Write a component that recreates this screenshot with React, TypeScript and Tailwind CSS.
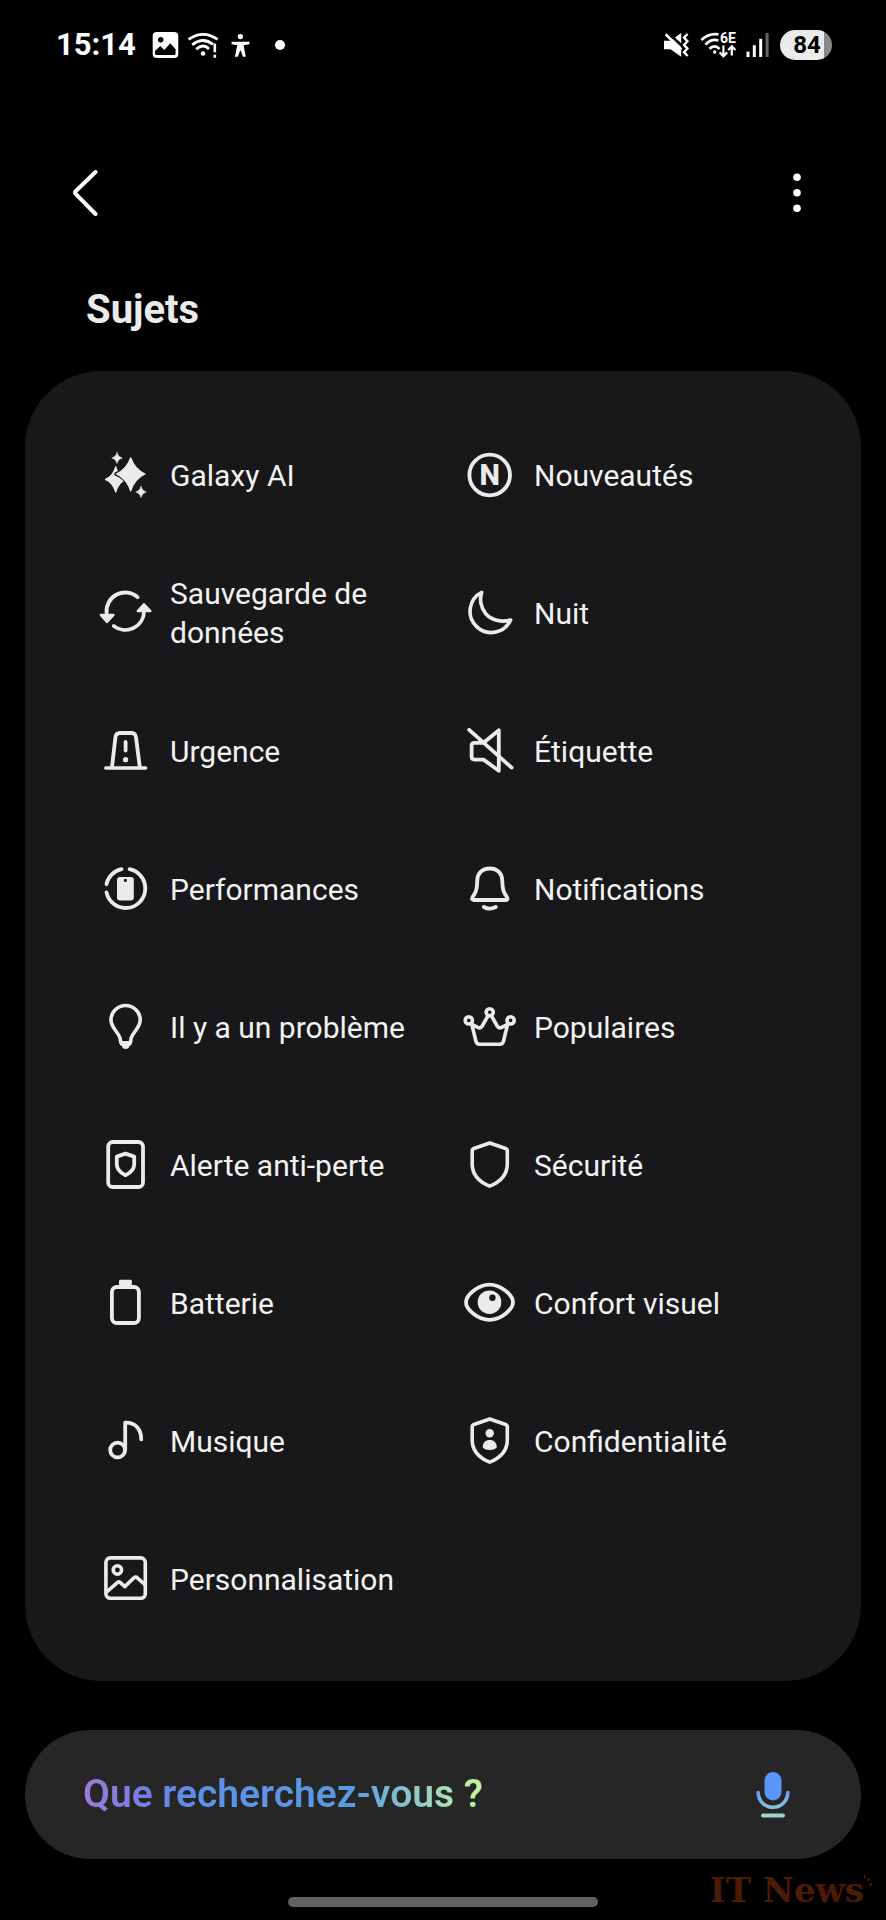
import React from "react";

type Topic = {
  label: string;
  icon: React.ReactNode;
};

const SHIELD =
  "M26.7 5 L43.3 10.8 Q44.3 11.2 44.3 12.3 V26 C44.3 36.5 37.5 43.8 26.7 48.2 C16 43.8 9.2 36.5 9.2 26 V12.3 Q9.2 11.2 10.2 10.8 Z";

const topics: Topic[] = [
  {
    label: "Galaxy AI",
    icon: (
      <g fill="currentColor" stroke="none">
        <path d="M16.7 18.7 Q19.7 28.3 27.3 31.4 Q19.7 34.5 16.7 44.3 Q13.7 34.5 6 31.4 Q13.7 28.3 16.7 18.7Z" stroke="currentColor" strokeWidth="1" />
        <path
          d="M31.7 9.8 Q34.7 22.3 46 26 Q34.7 29.7 31.7 43 Q28.7 29.7 17.4 26 Q28.7 22.3 31.7 9.8Z"
          stroke="#18181a"
          strokeWidth="4.4"
        />
        <path d="M31.7 9.8 Q35.7 21.3 46 26 Q35.7 30.7 31.7 43 Q27.7 30.7 17.4 26 Q27.7 21.3 31.7 9.8Z" stroke="currentColor" strokeWidth="1.2" />
        <path d="M18 4.8 Q19 9 23.2 10 Q19 11 18 15.4 Q17 11 12.8 10 Q17 9 18 4.8Z" stroke="currentColor" strokeWidth="0.6" />
        <path d="M42 38.6 Q43 43 47.2 44 Q43 45 42 49.4 Q41 45 36.8 44 Q41 43 42 38.6Z" stroke="currentColor" strokeWidth="0.6" />
      </g>
    ),
  },
  {
    label: "Nouveautés",
    icon: (
      <>
        <circle cx="26.7" cy="27" r="20.3" />
        <text
          x="26.7"
          y="37"
          fill="currentColor"
          stroke="none"
          textAnchor="middle"
          className="text-[29px] font-extrabold"
        >
          N
        </text>
      </>
    ),
  },
  {
    label: "Sauvegarde de données",
    icon: (
      <>
        <path d="M38.6 11.2 A18.7 18.7 0 0 0 7.6 27" />
        <path d="M14.8 40 A18.7 18.7 0 0 0 45 25" />
        <path d="M1.8 29 H14.4 L8 36Z M38.8 25 H51.4 L45 18.2Z" fill="currentColor" strokeWidth="2.4" />
      </>
    ),
  },
  {
    label: "Nuit",
    icon: <path d="M18.7 6.4 A21.2 21.2 0 1 0 47.6 34 C38 36.8 28.5 34 23 28 C17.8 22 16.3 13.5 18.7 6.4Z" strokeWidth="3.6" />,
  },
  {
    label: "Urgence",
    icon: (
      <>
        <path d="M6.8 44 H46.6" strokeWidth="3.6" />
        <path d="M13 43 L16.4 13.5 Q17 9 21 9 H32.5 Q36.4 9 37 13.5 L40.8 43" />
        <path d="M26.6 17.8 V26.6" />
        <circle cx="26.6" cy="35.7" r="2.6" fill="currentColor" stroke="none" />
      </>
    ),
  },
  {
    label: "Étiquette",
    icon: (
      <>
        <path d="M21.5 18 L35.8 6.2 V46.8 L20.5 35.6 H11.5 Q8.6 35.6 8.6 32.6 V21.8 Q8.6 18.8 11.5 18.8 H20Z" />
        <path d="M6.2 5.8 L48.6 43.6" />
      </>
    ),
  },
  {
    label: "Performances",
    icon: (
      <>
        <path d="M7.5 22.2 A19.6 19.6 0 0 1 22.6 7.2" />
        <path d="M30.6 7.2 A19.6 19.6 0 1 1 7.5 30.4" />
        <rect x="18" y="15" width="16.8" height="23.4" rx="3" fill="currentColor" stroke="none" />
        <circle cx="26.4" cy="18.4" r="1.6" fill="#18181a" stroke="none" />
      </>
    ),
  },
  {
    label: "Notifications",
    icon: (
      <>
        <path d="M26.7 6.5 C18.5 6.5 14.2 12 14.2 19 C14.2 28 12.5 31 9.5 35.2 Q8.2 38 10.8 38 H42.8 Q45.3 38 44 35.2 C41 31 39.3 28 39.3 19 C39.3 12 35 6.5 26.7 6.5Z" />
        <path d="M20.8 45 Q26.7 48.2 32.8 45" />
      </>
    ),
  },
  {
    label: "Il y a un problème",
    icon: (
      <>
        <path d="M21.8 42.5 L21 38 C19 31.5 12 28 12 19.8 A14.6 14.3 0 0 1 41.2 19.8 C41.2 28 34.2 31.5 32.2 38 L31.4 42.5" strokeWidth="3.6" />
        <path d="M20 41 H33.4 L32 45.5 H30.8 Q29.8 49 26.7 49 T22.5 45.5 H21.4Z" fill="currentColor" stroke="none" />
      </>
    ),
  },
  {
    label: "Populaires",
    icon: (
      <g strokeWidth="3.6">
        <circle cx="26.7" cy="12.3" r="3.6" />
        <circle cx="5.8" cy="20.4" r="3.6" />
        <circle cx="47.6" cy="20.4" r="3.6" />
        <path d="M8.8 24.4 L13 41.5 Q13.8 44.2 16.5 44.2 H37 Q39.6 44.2 40.4 41.5 L44.6 24.4 L38.2 27.6 Q35.8 28.6 34.2 26 L28.6 16.2 M8.8 24.4 L15.2 27.6 Q17.6 28.6 19.2 26 L24.8 16.2" />
      </g>
    ),
  },
  {
    label: "Alerte anti-perte",
    icon: (
      <>
        <rect x="9.2" y="4" width="34.8" height="45" rx="4.5" />
        <path d="M26.5 15.6 L35.2 18.6 V26.5 C35.2 31.5 31.8 34.6 26.5 37.2 C21.2 34.6 17.8 31.5 17.8 26.5 V18.6Z" />
      </>
    ),
  },
  {
    label: "Sécurité",
    icon: <path d={SHIELD} strokeWidth="3.6" />,
  },
  {
    label: "Batterie",
    icon: (
      <>
        <rect x="12.9" y="11" width="27" height="36" rx="5" />
        <rect x="20" y="3.8" width="12.8" height="7" rx="1.4" fill="currentColor" stroke="none" />
      </>
    ),
  },
  {
    label: "Confort visuel",
    icon: (
      <>
        <path d="M3 26.2 C3 19 15 8.6 26.5 8.6 S50 19 50 26.2 S38 43.8 26.5 43.8 S3 33.4 3 26.2Z" />
        <circle cx="26.5" cy="26.2" r="11.8" fill="currentColor" stroke="none" />
        <circle cx="29.4" cy="21.8" r="3.2" fill="#18181a" stroke="none" />
      </>
    ),
  },
  {
    label: "Musique",
    icon: (
      <>
        <circle cx="18.6" cy="36" r="7.4" />
        <path d="M26.2 36 V8.6 C36 8.2 42.4 15 42.2 25.4" />
      </>
    ),
  },
  {
    label: "Confidentialité",
    icon: (
      <>
        <path d={SHIELD} strokeWidth="3.6" />
        <circle cx="26.7" cy="19.2" r="4.2" fill="currentColor" stroke="none" />
        <path d="M19.7 33.5 C19.7 28.5 22.5 26 26.7 26 S33.8 28.5 33.8 33.5 Q31.5 36 26.7 36 T19.7 33.5Z" fill="currentColor" stroke="none" />
      </>
    ),
  },
  {
    label: "Personnalisation",
    icon: (
      <g strokeWidth="3.6">
        <rect x="6.9" y="5.9" width="39.4" height="40.4" rx="4.5" />
        <circle cx="18.4" cy="18" r="4.2" />
        <path d="M8 39.6 L18.6 30.4 Q20 29.4 21.4 30.6 L25.8 34.6 L35 25.8 Q36.7 24.4 38.3 25.8 L46 32.6" />
      </g>
    ),
  },
];

const StatusBar = () => {
  return (
    <div className="flex h-[90px] items-center justify-between pl-14 pr-[54px] text-white">
      <div className="flex items-center gap-4">
        <span className="text-[31px] leading-9 font-bold">15:14</span>
        <svg width="27" height="28" viewBox="0 0 27 28">
          <rect x="0.7" y="1" width="25.6" height="26" rx="4" fill="currentColor" />
          <circle cx="8.7" cy="8.7" r="2.7" fill="#000" />
          <path d="M3 20 L8.3 15 L12.3 19 L18.3 12.3 L23.6 18.3 V22.5 Q23.6 24 22 24 H4.5 Q3 24 3 22.5Z" fill="#000" />
        </svg>
        <div className="-ml-2 flex items-center gap-[10px]">
          <svg width="32" height="28" viewBox="0 0 32 28" fill="none" stroke="currentColor" strokeWidth="2.8">
            <path d="M1.6 8.4 Q16 -1.6 30.6 8.4 M5.2 13.8 Q16 5.4 26 13.4 M9.2 18.2 Q16 12 22 18" />
            <circle cx="16" cy="22.5" r="2.3" fill="currentColor" stroke="none" />
            <path d="M27.8 12.6 V21.2 M27.8 23.8 V26.8" strokeWidth="2.6" />
          </svg>
          <svg width="22" height="28" viewBox="0 0 22 28" fill="currentColor">
            <circle cx="11.4" cy="5.6" r="2.6" />
            <path d="M2.6 10.8 H20.4 V13.2 L14.6 14.2 L16.8 25.8 H14 L11.4 19 L8.8 25.8 H6 L8.2 14.2 L2.6 13.2Z" />
          </svg>
        </div>
        <span className="ml-2 size-[10px] rounded-full bg-white" />
      </div>

      <div className="flex items-center gap-[10px]">
        <svg width="28" height="28" viewBox="0 0 28 28" fill="none" stroke="currentColor">
          <path d="M2 9.8 H8.5 L19.2 2 V25.8 L8.5 18.2 H2Z" fill="currentColor" stroke="none" />
          <path d="M5.4 1.2 L22 16.8" stroke="#000" strokeWidth="2.6" />
          <path d="M3.6 3.2 L19.4 18.6" strokeWidth="2.6" />
          <path d="M25.6 3 L22 6.6 L25.4 10.2 L22 13.9 L25.4 17.6 L22 21.2 L25.6 25" strokeWidth="2.4" />
        </svg>
        <svg width="36" height="28" viewBox="0 0 36 28" className="overflow-visible" fill="none" stroke="currentColor" strokeWidth="2.6">
          <path d="M1.4 9 Q9 1.8 18.4 3.4 M5.4 13.6 Q11.6 7 18.4 9.6 M9.4 17.8 Q14.6 13 19.6 18" />
          <circle cx="14.7" cy="21" r="1.7" fill="currentColor" stroke="none" />
          <text x="20" y="12.4" fill="currentColor" stroke="none" className="text-[14px] font-bold">
            6E
          </text>
          <path d="M23.4 14.6 V24.6 M19.6 21.4 L23.4 25.2 L27.2 21.4 M31.8 24.6 V16 M28.2 19 L31.8 15.4 L35.4 19" strokeWidth="2.2" />
        </svg>
        <svg width="24" height="28" viewBox="0 0 24 28" fill="currentColor">
          <rect x="0.5" y="20.6" width="3" height="5.4" />
          <rect x="6.8" y="14.2" width="3" height="11.8" />
          <rect x="13.2" y="7.8" width="3" height="18.2" />
          <rect x="19.6" y="2" width="3" height="24" fill="#666" />
        </svg>
        <div className="flex h-[30px] w-[52px] items-center justify-center rounded-full bg-[linear-gradient(90deg,#ebebeb_0_44px,#8a8a8a_44px)] pl-[2px] text-[24px] leading-[30px] font-bold text-black">
          84
        </div>
      </div>
    </div>
  );
};

const TopicItem = ({ label, icon }: Topic) => {
  return (
    <li>
      <a href="#" className="flex h-[138px] items-center gap-[19px] pl-5 pr-4">
        <svg
          viewBox="0 0 52 52"
          className="size-[52px] shrink-0 overflow-visible text-[#ebebeb]"
          fill="none"
          stroke="currentColor"
          strokeWidth="3.8"
          strokeLinecap="round"
          strokeLinejoin="round"
        >
          {icon}
        </svg>
        <span className="pt-[2px] text-[30px] leading-[39px] text-[#f2f2f2]">{label}</span>
      </a>
    </li>
  );
};

const SearchBar = () => {
  return (
    <form className="mx-[25px] mt-[49px] flex h-[129px] items-center rounded-full bg-[#262626] pl-[58px] pr-[62px]">
      <input
        type="text"
        aria-label="Que recherchez-vous ?"
        placeholder="Que recherchez-vous ?"
        className="h-14 min-w-0 flex-1 bg-transparent text-[39px] font-semibold text-white outline-none placeholder:bg-[linear-gradient(90deg,#9b7bd8_0px,#6f7fe8_70px,#5a92e8_120px,#5a9ae0_270px,#96cfc8_340px,#c0f2a0_394px)] placeholder:bg-clip-text placeholder:text-transparent placeholder:opacity-100"
      />
      <button type="button" aria-label="Recherche vocale">
        <svg width="52" height="52" viewBox="0 0 52 52" fill="none" strokeLinecap="round">
          <defs>
            <linearGradient id="mic" gradientUnits="userSpaceOnUse" x1="0" y1="22" x2="0" y2="50">
              <stop offset="0" stopColor="#5f9df5" />
              <stop offset="1" stopColor="#a9d8c4" />
            </linearGradient>
          </defs>
          <rect x="17.5" y="3" width="17" height="28.5" rx="8.5" fill="#5896fb" />
          <path d="M11.2 23.5 A14.8 14.8 0 0 0 40.8 23.5" stroke="url(#mic)" strokeWidth="3.6" />
          <rect x="14" y="44.6" width="24" height="4" rx="2" fill="#a0d2cb" />
        </svg>
      </button>
    </form>
  );
};

const App = () => {
  return (
    <div className="relative min-h-screen bg-black font-['Roboto','Liberation_Sans',sans-serif]">
      <StatusBar />

      {/* Header */}
      <header className="mt-[54px] flex h-24 items-center justify-between px-[54px]">
        <button type="button" aria-label="Retour" className="flex size-16 items-center justify-center text-white">
          <svg width="30" height="48" viewBox="0 0 30 48" fill="none" stroke="currentColor" strokeWidth="4" strokeLinecap="round" strokeLinejoin="round">
            <path d="M24.5 4 L4.6 23.2 Q3.6 24.5 4.6 25.8 L24.5 46" />
          </svg>
        </button>
        <button type="button" aria-label="Plus d'options" className="flex h-16 w-[70px] items-center justify-center text-white">
          <svg width="8" height="40" viewBox="0 0 8 40" fill="currentColor">
            <circle cx="4" cy="5.2" r="3.8" />
            <circle cx="4" cy="20.8" r="3.8" />
            <circle cx="4" cy="36.2" r="3.8" />
          </svg>
        </button>
      </header>

      <h1 className="mt-[46px] pl-[86px] text-[40px] leading-12 font-bold text-[#ebebeb]">Sujets</h1>

      {/* Topics */}
      <ul className="mx-[25px] mt-[37px] grid grid-cols-2 rounded-[76px] bg-[#18181a] px-[54px] py-[34px]">
        {topics.map((topic) => (
          <TopicItem key={topic.label} {...topic} />
        ))}
      </ul>

      <SearchBar />

      <div className="mx-auto mt-[38px] h-[10px] w-[310px] rounded-full bg-[#616161]" />
      <div className="h-[13px]" />

      {/* Watermark */}
      <div className="absolute right-3 bottom-[10px] flex items-start text-[#4d1a08]">
        <span className="font-['DejaVu_Serif',serif] text-[34px] leading-10 font-bold">IT News</span>
        <svg width="10" height="20" viewBox="0 0 10 20" fill="none" stroke="currentColor" strokeWidth="2">
          <path d="M1 8 L0 5 M4 11 L5 8 M5 15 L8 14" />
        </svg>
      </div>
    </div>
  );
};

export default App;
